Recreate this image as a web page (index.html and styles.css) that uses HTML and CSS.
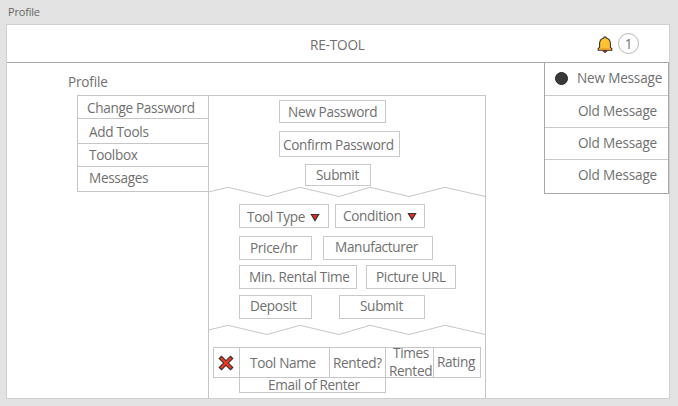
FILE: index.html
```html
<!DOCTYPE html>
<html lang="en">
<head>
<meta charset="utf-8">
<title>Profile</title>
<link rel="stylesheet" href="styles.css">
</head>
<body>
<div class="board-name">Profile</div>
<div class="artboard">
  <header class="header">
    <span class="brand">RE-TOOL</span>
    <svg class="bell" width="16" height="18" viewBox="0 0 16 18"><path d="M6.2 14.2h3.6v1.2L8 16.5 6.2 15.4z" fill="#c8501e" stroke="#333" stroke-width="1"/><path d="M1.2 14.2v-1.6l1.4-1.3V7.2C2.8 4.3 4.5 2.8 6.5 2.3 6.6 1.3 7.2.9 8 .9s1.4.4 1.5 1.4c2 .5 3.7 2 3.9 4.9v4.1l1.4 1.3v1.6z" fill="#ffc233" stroke="#333" stroke-width="1.1"/><path d="M2 12.9h12" stroke="#f39a1f" stroke-width="1.2"/></svg>
    <span class="count">1</span>
  </header>
  <div class="content">
    <nav class="side">
      <h1 class="title">Profile</h1>
      <ul class="menu">
        <li class="m-password">Change Password</li>
        <li class="m-add">Add Tools</li>
        <li class="m-box">Toolbox</li>
        <li class="m-messages">Messages</li>
      </ul>
    </nav>
    <main class="panel">
      <section class="password">
        <div class="box new-pass">New Password</div>
        <div class="box confirm-pass">Confirm Password</div>
        <div class="box submit-pass">Submit</div>
      </section>
      <svg class="zigzag" width="278" height="12" viewBox="0 0 278 12"><path d="M0.5 6 20 1.3 59 10.5 92 1.3 131 10.5 162 1.3 201 10.5 237 1.3 277.5 10.5"/></svg>
      <section class="tool-form">
        <div class="row row-select">
          <div class="box type">Tool Type<svg class="arrow" width="10" height="9" viewBox="0 0 10 9"><path d="M1.4 1.5h7.2L5 7.5z"/></svg></div>
          <div class="box condition">Condition<svg class="arrow" width="10" height="9" viewBox="0 0 10 9"><path d="M1.4 1.5h7.2L5 7.5z"/></svg></div>
        </div>
        <div class="row row-price">
          <div class="box price">Price/hr</div>
          <div class="box maker">Manufacturer</div>
        </div>
        <div class="row row-rental">
          <div class="box rental">Min. Rental Time</div>
          <div class="box picture">Picture URL</div>
        </div>
        <div class="row row-deposit">
          <div class="box deposit">Deposit</div>
          <div class="box submit-tool">Submit</div>
        </div>
      </section>
      <svg class="zigzag" width="278" height="12" viewBox="0 0 278 12"><path d="M0.5 6 20 1.3 59 10.5 92 1.3 131 10.5 162 1.3 201 10.5 237 1.3 277.5 10.5"/></svg>
      <section class="tools">
        <div class="tool-row">
          <div class="cell remove"><svg width="16" height="16" viewBox="0 0 16 16"><path class="x-edge" d="M3.5 3.5l9 9M12.5 3.5l-9 9"/><path class="x-fill" d="M3.5 3.5l9 9M12.5 3.5l-9 9"/></svg></div>
          <div class="cell name">Tool Name</div>
          <div class="cell rented">Rented?</div>
          <div class="cell times"><span class="t1">Times</span><span class="t2">Rented</span></div>
          <div class="cell rating">Rating</div>
        </div>
        <div class="renter">Email of Renter</div>
      </section>
    </main>
    <aside class="messages">
      <div class="message fresh"><span class="dot"></span>New Message</div>
      <div class="message">Old Message</div>
      <div class="message">Old Message</div>
      <div class="message last">Old Message</div>
    </aside>
  </div>
</div>
</body>
</html>
```
FILE: styles.css
```css
* { box-sizing: border-box; }
body {
  margin: 0;
  width: 678px;
  height: 406px;
  overflow: hidden;
  background: #e3e3e3;
  color: #707070;
  font: 13.6px/20px "Open Sans", "Noto Sans", sans-serif;
  letter-spacing: -0.33px;
  white-space: nowrap;
}
.board-name { height: 24px; padding: 2px 0 0 8px; font-size: 11px; letter-spacing: -0.2px; color: #666; }
.artboard {
  width: 664px;
  height: 375px;
  margin-left: 6px;
  background: #fff;
  border: 1px solid #d0d0d0;
}
.header {
  display: flex;
  height: 38px;
  border-bottom: 1px solid #a8a8a8;
}
.brand { width: 286px; margin: 10px 0 0 303px; letter-spacing: -0.2px; }
.bell { margin: 11px 0 0 1px; }
.count {
  width: 21px;
  height: 21px;
  margin: 8px 0 0 5px;
  border: 1px solid #b5b5b5;
  border-radius: 50%;
  line-height: 19px;
  text-align: center;
}
.content { display: flex; height: 335px; }
.side { width: 201px; padding-top: 9px; }
.title { margin: 0 0 3px 61px; font: inherit; letter-spacing: -0.2px; }
.menu { margin: 0 0 0 70px; padding: 0; list-style: none; border: 1px solid #c6c6c6; border-right: 0; }
.menu li { border-bottom: 1px solid #c6c6c6; }
.menu .m-password { height: 23px; padding: 2px 0 0 9px; }
.menu .m-add { height: 25px; padding: 3px 0 0 11px; }
.menu .m-box { height: 23px; padding: 1px 0 0 11px; }
.menu .m-messages { height: 24px; padding: 1px 0 0 11px; border-bottom: 0; }
.panel {
  width: 278px;
  height: 303px;
  margin-top: 32px;
  border: 1px solid #c6c6c6;
  border-bottom: 0;
}
.box { border: 1px solid #c9c9c9; }
.password { height: 90px; padding-top: 4px; }
.new-pass { width: 107px; height: 23px; margin-left: 70px; padding: 1px 0 0 8px; }
.confirm-pass { width: 121px; height: 26px; margin: 8px 0 0 70px; padding: 3px 0 0 3px; }
.submit-pass { width: 66px; height: 22px; margin: 7px 0 0 96px; padding-left: 10px; }
.zigzag { display: block; margin-left: -1px; fill: none; stroke: #c6c6c6; stroke-width: 1; }
.tool-form { padding: 6px 0 0 30px; height: 126px; }
.row { display: flex; }
.row-select { height: 32px; gap: 6px; }
.row-price { height: 29px; }
.row-rental { height: 30px; gap: 9px; }
.row-deposit { gap: 27px; }
.row .box { height: 24px; }
.row .type { width: 90px; padding: 2px 0 0 7px; }
.row .condition { width: 90px; padding: 1px 0 0 7px; }
.arrow { margin-left: 5px; }
.arrow path { fill: #ee2c1b; stroke: #333; stroke-width: 1.2; }
.row .price { width: 73px; padding: 1px 0 0 10px; }
.row .maker { width: 110px; margin-left: 11px; padding-left: 11px; }
.row .rental { width: 118px; padding: 1px 0 0 9px; }
.row .picture { width: 90px; padding: 1px 0 0 9px; }
.row .deposit { width: 73px; padding: 0 0 0 10px; }
.row .submit-tool { width: 86px; padding: 0 0 0 20px; }
.tools { padding: 11px 0 0 4px; }
.tool-row { display: flex; width: 268px; height: 31px; border: 1px solid #c6c6c6; }
.cell { border-right: 1px solid #c6c6c6; padding-top: 5px; }
.cell:last-child { border-right: 0; }
.remove { width: 26px; padding: 7px 0 0 4px; }
.remove svg { display: block; }
.x-edge { stroke: #333; stroke-width: 4.4; stroke-linecap: square; }
.x-fill { stroke: #f03a1e; stroke-width: 2.4; stroke-linecap: round; }
.name { width: 90px; padding-left: 10px; }
.rented { width: 56px; padding-left: 3px; }
.times { width: 48px; padding-top: 0; }
.times span { display: block; height: 18px; }
.t1 { margin: -5px 0 0 7px; }
.t2 { margin-left: 3px; }
.rating { padding: 4px 0 0 3px; }
.renter {
  width: 147px;
  height: 16px;
  margin: -1px 0 0 26px;
  padding-left: 28px;
  border: 1px solid #c6c6c6;
  line-height: 14px;
}
.messages { width: 125px; height: 132px; margin: -1px 0 0 58px; border: 1px solid #a8a8a8; letter-spacing: -0.2px; }
.message { height: 32px; padding: 5px 0 0 33px; border-bottom: 1px solid #c9c9c9; }
.fresh { display: flex; height: 33px; padding: 5px 0 0 10px; }
.last { border-bottom: 0; }
.dot { width: 13px; height: 13px; margin: 4px 9px 0 0; border: 1px solid #222; border-radius: 50%; background: #3a3a3a; }
```
